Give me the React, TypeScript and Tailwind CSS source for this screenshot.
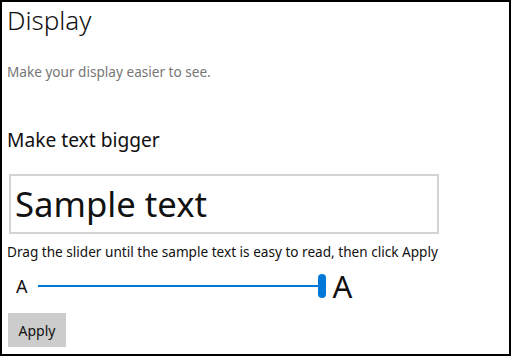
import React from "react";

export default function App() {
  return (
    <div
      className="w-[511px] h-[356px] border-2 border-black bg-white text-black flex flex-col"
      style={{ fontFamily: '"Noto Sans", "Open Sans", sans-serif' }}
    >
      <div className="pl-[5px] pt-0 text-[26px] leading-[36px] font-light text-[#111]">Display</div>
      <div className="pl-[5px] mt-[25px] text-[13.6px] leading-[18px] text-[#767676]">
        Make your display easier to see.
      </div>
      <div className="pl-[5px] mt-[47px] text-[19.2px] leading-[24px] text-[#111]">Make text bigger</div>
      <div className="ml-[7px] mt-[22px] w-[430px] h-[60px] border-2 border-[#d4d4d4] flex items-center pl-[4px]">
        <span className="text-[34.7px] leading-[40px] text-[#111]">Sample text</span>
      </div>
      <div className="pl-[5px] mt-[9px] text-[13.6px] leading-[18px] text-[#111]">
        Drag the slider until the sample text is easy to read, then click Apply
      </div>
      <div className="flex items-center h-[26px] mt-[12px] pl-[14px]">
        <span className="text-[18px] leading-[20px] text-[#111]">A</span>
        <div className="ml-[10px] w-[280px] h-[2px] bg-[#0078d7]" />
        <div className="w-[8px] h-[24px] rounded-full bg-[#0078d7]" />
        <span className="ml-[7px] text-[31px] leading-[30px] text-[#111]">A</span>
      </div>
      <div className="ml-[6px] mt-[14px] w-[58px] h-[34px] bg-[#cccccc] flex items-center justify-center text-[14px] text-[#111]">
        Apply
      </div>
    </div>
  );
}
